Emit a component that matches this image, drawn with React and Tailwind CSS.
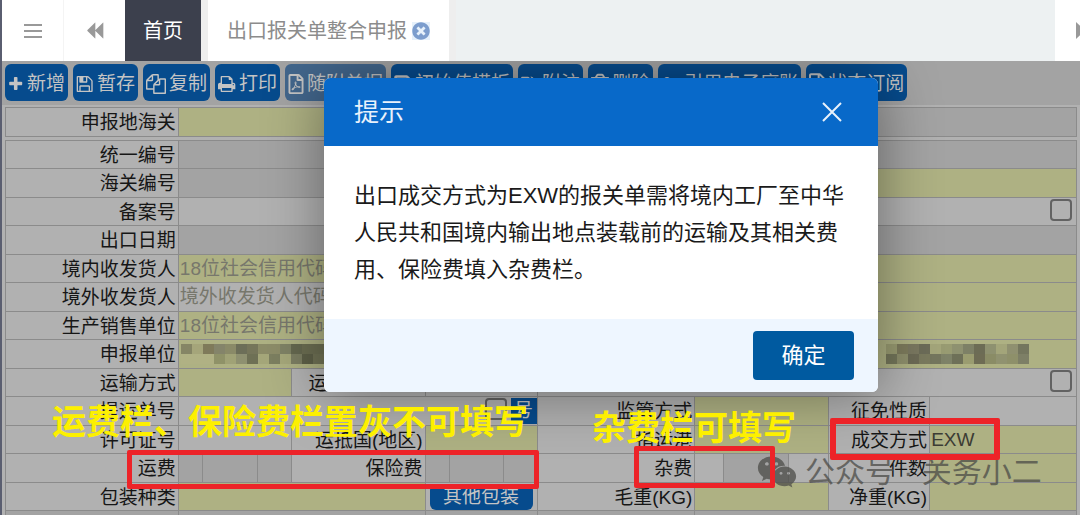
import React, { useState } from "react";
import {
  FaRegFilePdf,
  FaSave,
  FaTags,
  FaRegTrashAlt,
  FaUserFriends,
  FaRegFile,
  FaTimesCircle,
  FaWeixin,
} from "react-icons/fa";

const FONT = "font-['Liberation_Sans','Noto_Sans_CJK_SC',sans-serif]";

// Font Awesome 4 shapes, drawn on its 1792 grid
const PATHS = {
  plus: "M1600 736v192q0 40-28 68t-68 28h-416v416q0 40-28 68t-68 28h-192q-40 0-68-28t-28-68v-416h-416q-40 0-68-28t-28-68v-192q0-40 28-68t68-28h416v-416q0-40 28-68t68-28h192q40 0 68 28t28 68v416h416q40 0 68 28t28 68z",
  save: "M512 1536h768v-384h-768v384zm896 0h128v-896q0-14-10-38.5t-20-34.5l-281-281q-10-10-34-20t-39-10v416q0 40-28 68t-68 28h-576q-40 0-68-28t-28-68v-416h-128v1280h128v-416q0-40 28-68t68-28h832q40 0 68 28t28 68v416zm-384-928v-320q0-13-9.5-22.5t-22.5-9.5h-192q-13 0-22.5 9.5t-9.5 22.5v320q0 13 9.5 22.5t22.5 9.5h192q13 0 22.5-9.5t9.5-22.5zm640 32v928q0 40-28 68t-68 28h-1344q-40 0-68-28t-28-68v-1344q0-40 28-68t68-28h928q40 0 88 20t76 48l280 280q28 28 48 76t20 88z",
  copy: "M1696 384q40 0 68 28t28 68v1216q0 40-28 68t-68 28h-960q-40 0-68-28t-28-68v-288h-544q-40 0-68-28t-28-68v-672q0-40 20-88t48-76l408-408q28-28 76-48t88-20h416q40 0 68 28t28 68v328q68-40 128-40h416zm-544 213l-299 299h299v-299zm-640-384l-299 299h299v-299zm196 647l316-316v-416h-384v416q0 40-28 68t-68 28h-416v640h512v-256q0-40 20-88t48-76zm956 804v-1152h-384v416q0 40-28 68t-68 28h-416v640h896z",
  print:
    "M448 1536h896v-256h-896v256zm0-640h896v-384h-160q-40 0-68-28t-28-68v-160h-640v640zm1152 64q0-26-19-45t-45-19-45 19-19 45 19 45 45 19 45-19 19-45zm128 0v416q0 13-9.5 22.5t-22.5 9.5h-224v160q0 40-28 68t-68 28h-960q-40 0-68-28t-28-68v-160h-224q-13 0-22.5-9.5t-9.5-22.5v-416q0-79 56.5-135.5t135.5-56.5h64v-544q0-40 28-68t68-28h672q40 0 88 20t76 48l152 152q28 28 48 76t20 88v256h64q79 0 135.5 56.5t56.5 135.5z",
  backward:
    "M1683 141q19-19 32-13t13 32v1472q0 26-13 32t-32-13l-710-710q-9-9-13-19v710q0 26-13 32t-32-13l-710-710q-19-19-19-45t19-45l710-710q19-19 32-13t13 32v710q4-10 13-19z",
};

const Glyph = ({ name, className }) => (
  <svg viewBox="64 0 1728 1792" className={className} fill="currentColor">
    <path d={PATHS[name]} />
  </svg>
);

const tools = [
  { text: "新增", icon: <Glyph name="plus" className="w-4 h-5" /> },
  { text: "暂存", icon: <Glyph name="save" className="w-[18px] h-5" /> },
  {
    text: "复制",
    icon: (
      <svg viewBox="0 0 1792 1792" className="w-5 h-5" fill="currentColor">
        <path d={PATHS.copy} />
      </svg>
    ),
  },
  { text: "打印", icon: <Glyph name="print" className="w-[18px] h-5" /> },
  { text: "随附单据", icon: <FaRegFilePdf className="w-4 h-5" />, off: true },
  { text: "初始值模板", icon: <FaSave className="w-[18px] h-5" /> },
  { text: "附注", icon: <FaTags className="w-[18px] h-5" /> },
  { text: "删除", icon: <FaRegTrashAlt className="w-[18px] h-6" /> },
  { text: "引用电子底账", icon: <FaUserFriends className="w-5 h-6" /> },
  { text: "状态订阅", icon: <FaRegFile className="w-4 h-6" /> },
];

const COLS =
  "grid grid-cols-[173fr_113fr_134fr_112fr_158fr_134fr_101fr_147fr]";

const SPANS = {
  1: "col-span-1",
  2: "col-span-2",
  3: "col-span-3",
  4: "col-span-4",
};

const FILLS = {
  need: "bg-[#aeb183]",
  off: "bg-[#a3a3a3]",
  open: "bg-[#b1b1b1]",
};

// l = label, f = fill of a field, s = columns it takes
const rows = [
  [{ l: "统一编号" }, { f: "off", s: 3 }, { f: "off", s: 4 }],
  [{ l: "海关编号" }, { f: "off", s: 3 }, { f: "need", s: 4 }],
  [{ l: "备案号" }, { f: "open", s: 3 }, { f: "open", s: 4, check: true }],
  [{ l: "出口日期" }, { f: "off", s: 3 }, { f: "off", s: 4 }],
  [
    { l: "境内收发货人" },
    { f: "need", s: 3, hint: "18位社会信用代码" },
    { f: "need", s: 4 },
  ],
  [
    { l: "境外收发货人" },
    { f: "open", s: 3, hint: "境外收发货人代码" },
    { f: "need", s: 4 },
  ],
  [
    { l: "生产销售单位" },
    { f: "need", s: 3, hint: "18位社会信用代码" },
    { f: "need", s: 4 },
  ],
  [
    { l: "申报单位" },
    { f: "need", s: 3, mask: "left" },
    { f: "need", s: 4, mask: "right" },
  ],
  [
    { l: "运输方式" },
    { f: "need" },
    { l: "运输工具名称" },
    { f: "open" },
    { f: "open", s: 4, check: true },
  ],
  [
    { l: "提运单号" },
    { f: "open", s: 3, check: true, button: "号" },
    { l: "监管方式" },
    { f: "need" },
    { l: "征免性质" },
    { f: "open" },
  ],
  [
    { l: "许可证号" },
    { f: "open" },
    { l: "运抵国(地区)" },
    { f: "need" },
    { l: "指运港" },
    { f: "need" },
    { l: "成交方式" },
    { f: "need", value: "EXW" },
  ],
  [
    { l: "运费" },
    { split: ["off", "off", "off"] },
    { l: "保险费" },
    { split: ["off", "off", "off"] },
    { l: "杂费" },
    { split: ["open", "off", "open"] },
    { l: "件数" },
    { f: "need" },
  ],
  [
    { l: "包装种类" },
    { f: "need", s: 2 },
    { wide: "其他包装" },
    { l: "毛重(KG)" },
    { f: "need" },
    { l: "净重(KG)" },
    { f: "need" },
  ],
  [
    { f: "off" },
    { f: "off", s: 2 },
    { f: "off" },
    { f: "off" },
    { f: "off", s: 3 },
  ],
];

const maskLeft = [
  ["#858565", "#a5a57a", "#7f7a5a", "#84846a", "#8a8a68", "#6c6e58", "#75755a", "#8c8c68", "#8c8c68", "#7f8265", "#65684f", "#6c6e52", "#6c6e52"],
  ["#b0b184", "#b0b184", "#b0b184", "#8f9268", "#a0a276", "#8e9070", "#6e7055", "#a5a77a", "#7c7f60", "#a5a77a", "#7c7e62", "#5e6048", "#707255"],
];
const maskRight = [
  ["#9a9c72", "#7d7b5c", "#7a7860", "#6c6c58", "#a3a57a", "#989b72", "#8e9170", "#7d8066", "#6c6c55", "#8e9170", "#a3a57a", "#8f9070", "#74765e"],
  ["#74765a", "#8e8f6c", "#6c6a55", "#7a7a5e", "#74765e", "#7e8268", "#6e7058", "#9a9c70", "#6e6c54", "#8a8c66", "#909270", "#8e906a", "#7d7f66"],
];

// Blurred-out company name
const Mask = ({ cells }) => (
  <svg width="143" height="20" aria-hidden="true" className="shrink-0">
    {cells.map((line, y) =>
      line.map((fill, x) => (
        <rect
          key={`${x}-${y}`}
          x={x * 11}
          y={y * 10}
          width="11"
          height="10"
          fill={fill}
        />
      )),
    )}
  </svg>
);

const Check = ({ name }) => (
  <input
    type="checkbox"
    aria-label={name}
    className="appearance-none w-[22px] h-[22px] mb-1 shrink-0 rounded border-2 border-[#626262]"
  />
);

const Cell = ({ cell, id, name }) => {
  const base = `min-w-0 flex items-center border-l border-t border-[#8b8b8b] ${SPANS[cell.s || 1]}`;

  if (cell.l) {
    return (
      <label
        htmlFor={`${id}-field`}
        className={`${base} justify-end pt-0.5 pr-0.5 bg-[#b1b1b1] whitespace-nowrap`}
      >
        {cell.l}
      </label>
    );
  }

  if (cell.wide) {
    return (
      <div className={`${base} justify-center bg-[#b1b1b1] px-1`}>
        <button className="w-full h-[26px] rounded-md bg-[#064b8d] text-[#c4c4c4] leading-6">
          {cell.wide}
        </button>
      </div>
    );
  }

  if (cell.split) {
    const widths = ["flex-[24]", "flex-[55]", "flex-[34]"];
    return (
      <div className={`${base} items-stretch`}>
        {cell.split.map((fill, i) => (
          <input
            key={i}
            id={i === 0 ? `${id}-field` : undefined}
            aria-label={`${name} ${i + 1}`}
            disabled={fill === "off"}
            className={`min-w-0 ${widths[i]} ${FILLS[fill]} ${i > 0 ? "border-l border-[#8b8b8b]" : ""}`}
          />
        ))}
      </div>
    );
  }

  return (
    <div
      className={`${base} ${FILLS[cell.f]} ${cell.check && !cell.button ? "pr-1" : ""}`}
    >
      {cell.mask === "left" && (
        <div className="flex pl-0.5">
          <Mask cells={maskLeft} />
        </div>
      )}
      {cell.mask === "right" && (
        <div className="flex-1 flex justify-end pr-[47px]">
          <Mask cells={maskRight} />
        </div>
      )}
      {!cell.mask && (
        <input
          id={`${id}-field`}
          aria-label={name}
          disabled={cell.f === "off"}
          placeholder={cell.hint}
          defaultValue={cell.value}
          className="flex-1 min-w-0 h-full bg-transparent outline-none px-px text-[#3c3c34] placeholder:text-[#77776c]"
        />
      )}
      {cell.check && <Check name={name} />}
      {cell.button && (
        <button className="ml-1 w-[26px] h-[26px] bg-[#064b8d] text-[#c4c4c4] leading-6">
          {cell.button}
        </button>
      )}
    </div>
  );
};

const Row = ({ cells, prefix }) => {
  let label = "";
  return cells.map((cell, i) => {
    if (cell.l) label = cell.l;
    // a label points at the field that follows it
    const id = `${prefix}-${cell.l ? i + 1 : i}`;
    return <Cell key={i} cell={cell} id={id} name={label || "其他"} />;
  });
};

const Tabs = () => (
  <nav className="relative z-20 flex h-[61px] shrink-0 bg-[#edf1f2] text-xl">
    <button
      aria-label="菜单"
      className="w-[62px] bg-white border-r border-[#f4f4f4] flex items-center justify-center text-[#999]"
    >
      <svg width="18" height="16" fill="currentColor">
        <rect y="1" width="18" height="2" />
        <rect y="7" width="18" height="2" />
        <rect y="13" width="18" height="2" />
      </svg>
    </button>
    <button
      aria-label="向左"
      className="w-[61px] bg-white flex items-center justify-center text-[#999]"
    >
      <Glyph name="backward" className="w-[18px] h-[19px]" />
    </button>
    <a
      href="#home"
      className="w-[76px] bg-[#3c404d] text-white flex items-center justify-center"
    >
      首页
    </a>
    <div className="bg-white border-x-[7px] border-[#eeeeee] flex items-center gap-[5px] px-[19px] text-[#8c8c8c]">
      <a href="#export">出口报关单整合申报</a>
      <button aria-label="关闭标签" className="bg-[#e6f1fb] text-[#7c9dcd]">
        <FaTimesCircle className="w-[18px] h-[18px]" />
      </button>
    </div>
    <button
      aria-label="向右"
      className="ml-auto w-[25px] bg-white overflow-hidden flex items-center text-[#999]"
    >
      <svg viewBox="0 0 9 17" className="ml-[21px] w-[9px] h-[17px] shrink-0">
        <path d="M0 0L9 8.5L0 17Z" fill="currentColor" />
      </svg>
    </button>
  </nav>
);

const Dialog = ({ onClose }) => (
  <div
    role="dialog"
    aria-labelledby="tip-title"
    className="absolute z-10 top-[78px] left-[322px] w-[554px] rounded-md overflow-hidden bg-white shadow-[1px_1px_60px_rgba(0,0,0,0.4)]"
  >
    <div className="h-[68px] bg-[#0869c9] text-[#e8f1fb] flex items-center justify-between pl-[30px] pr-9">
      <h2 id="tip-title" className="text-[25px]">
        提示
      </h2>
      <button aria-label="关闭" onClick={onClose}>
        <svg width="20" height="20" stroke="currentColor" strokeWidth="2">
          <path d="M1 1L19 19M19 1L1 19" />
        </svg>
      </button>
    </div>
    <p className="px-[30px] py-[31px] text-[22px] leading-[37px] text-[#1a1a1a]">
      出口成交方式为EXW的报关单需将境内工厂至中华人民共和国境内输出地点装载前的运输及其相关费用、保险费填入杂费栏。
    </p>
    <div className="bg-[#eef6ff] flex justify-end py-3 pr-6">
      <button
        onClick={onClose}
        className="w-[101px] h-[49px] rounded bg-[#005aa0] text-white text-[22px]"
      >
        确定
      </button>
    </div>
  </div>
);

// Explanatory marks drawn over the form
const Notes = () => (
  <div className="absolute inset-0 z-20 pointer-events-none">
    <p className="absolute left-[50px] top-[402px] text-[34px] leading-10 font-bold text-[#fdf000] whitespace-nowrap">
      运费栏、保险费栏置灰不可填写
    </p>
    <p className="absolute left-[590px] top-[408px] text-[34px] leading-10 font-bold text-[#fdf000] whitespace-nowrap">
      杂费栏可填写
    </p>
    <div className="absolute left-[755px] top-[454px] flex items-center gap-2 text-[30px] leading-9 text-[#4c4c48]/75 whitespace-nowrap">
      <FaWeixin className="w-10 h-9" />
      <span>公众号 · 关务小二</span>
    </div>
    <div className="absolute left-[125px] top-[450px] w-[412px] h-[39px] rounded-xs border-5 border-[#ed2328]" />
    <div className="absolute left-[632px] top-[446px] w-[141px] h-[42px] rounded-xs border-5 border-[#ed2328]" />
    <div className="absolute left-[828px] top-[418px] w-[170px] h-[42px] rounded-xs border-6 border-[#ed2328]" />
  </div>
);

const App = () => {
  const [open, setOpen] = useState(true);

  return (
    <div
      className={`${FONT} relative h-screen flex flex-col overflow-hidden border-l-2 border-[#5a5e70] bg-[#b1b1b1] text-[19px] leading-6 text-[#161616]`}
    >
      <Tabs />

      {/* Toolbar */}
      <div className="flex gap-[5px] h-11 shrink-0 pt-[3px] px-[3px] bg-[#a3a3a3]">
        {tools.map((tool) => (
          <button
            key={tool.text}
            disabled={tool.off}
            className={`h-[37px] shrink-0 rounded-md px-[3px] pt-0.5 flex items-center gap-[3px] whitespace-nowrap text-[#c4c4c4] ${
              tool.off ? "bg-[#42668c]" : "bg-[#064b8d]"
            }`}
          >
            {tool.icon}
            {tool.text}
          </button>
        ))}
      </div>

      {/* Declaration form */}
      <form className="px-[3px] pt-0.5">
        <div
          className={`${COLS} h-[30px] mb-[3px] border-r border-b border-[#8b8b8b]`}
        >
          <Row
            prefix="port"
            cells={[
              { l: "申报地海关" },
              { f: "need", s: 3 },
              { f: "off", s: 4 },
            ]}
          />
        </div>
        {rows.map((cells, i) => (
          <div
            key={i}
            className={`${COLS} border-r border-[#8b8b8b] ${i % 2 ? "h-[29px]" : "h-7"}`}
          >
            <Row prefix={`r${i}`} cells={cells} />
          </div>
        ))}
      </form>

      {open && <Dialog onClose={() => setOpen(false)} />}
      <Notes />
    </div>
  );
};

export default App;
